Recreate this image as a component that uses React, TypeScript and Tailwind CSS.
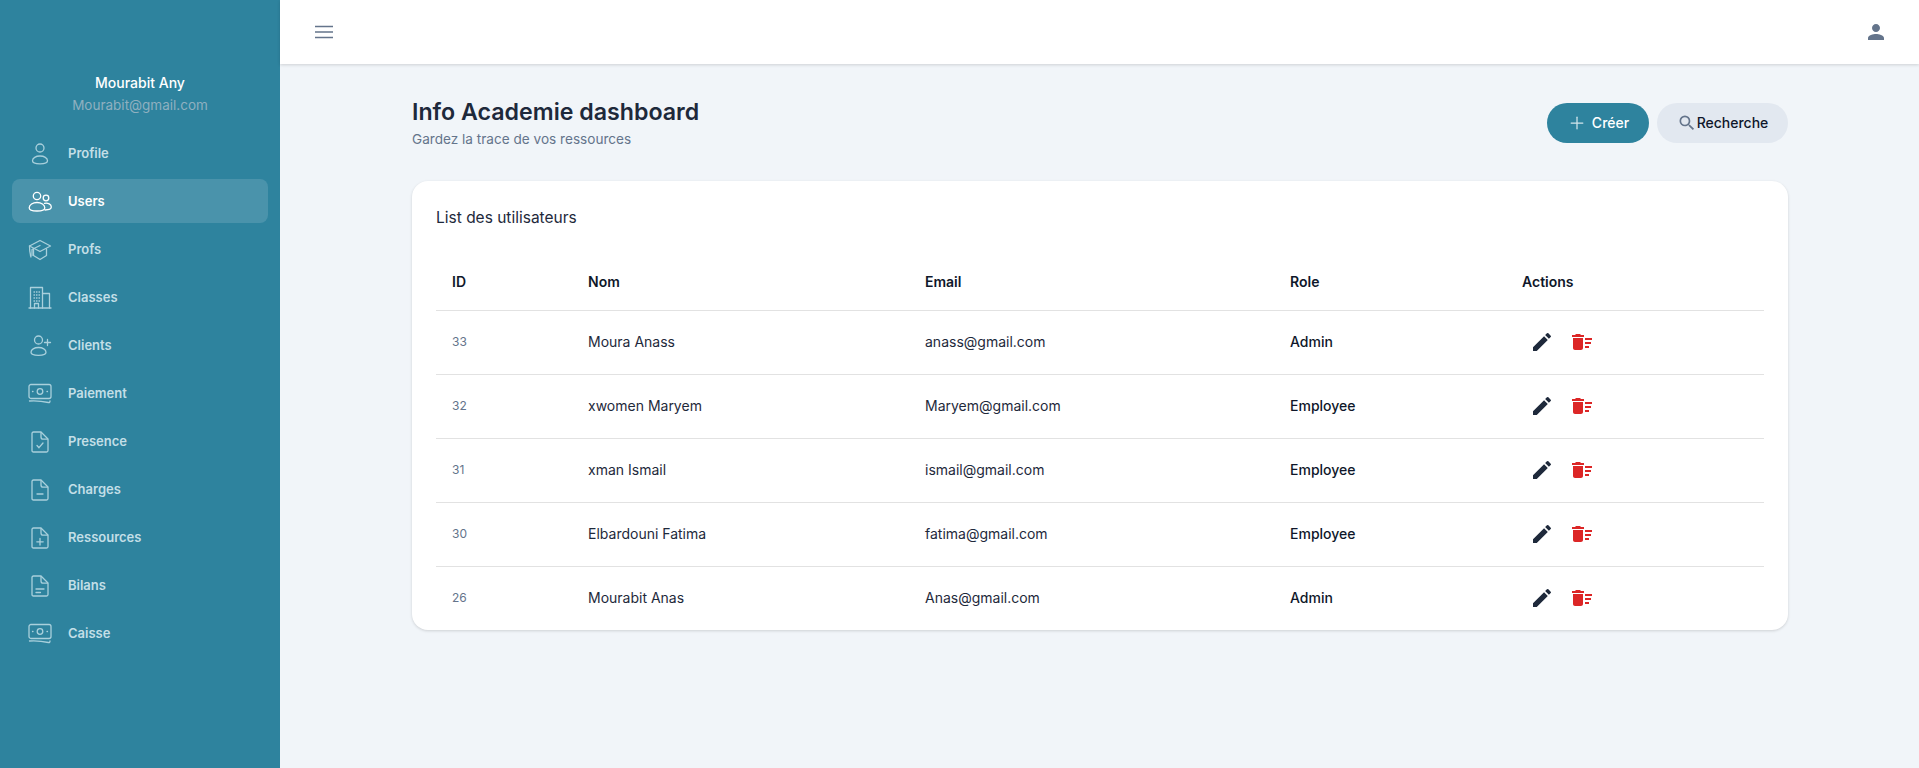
import { Plus } from "lucide-react"
import { MdDeleteSweep, MdEdit, MdOutlineSearch, MdPerson } from "react-icons/md"
import type { ReactNode } from "react"

const Icon = ({ children }: { children: ReactNode }) => (
  <svg viewBox="0 0 24 24" fill="none" stroke="currentColor" strokeWidth={1.3} strokeLinecap="round" strokeLinejoin="round" className="w-6 h-6 shrink-0">
    {children}
  </svg>
)

const PersonIcon = () => (
  <Icon>
    <circle cx="12" cy="6" r="4" />
    <path d="M12 14c-4.200 0-7.500 2-7.500 4.700 0 2.200 3.300 3.100 7.500 3.100s7.500-.9 7.500-3.100C19.500 16 16.200 14 12 14z" />
  </Icon>
)

const UsersIcon = () => (
  <Icon>
    <circle cx="9" cy="6" r="3.700" />
    <circle cx="18" cy="8" r="2.800" />
    <path d="M9 12.500c-4.200 0-7.800 2.200-7.800 5.200 0 2.300 3.600 3.300 7.800 3.300s7.800-1 7.800-3.300c0-3-3.600-5.200-7.800-5.200z" />
    <path d="M16.500 13.300c3.500-.6 6.800.8 6.800 3.800 0 2-2.500 2.900-6.300 2.900" />
  </Icon>
)

const CapIcon = () => (
  <Icon>
    <path d="M12 2.500 1.500 8 12 13.500 22.500 8z" />
    <path d="M5.500 11v6.500L12 21.500l6.500-4V11" />
    <path d="M1.500 8c0 4 .5 8 1.500 11" />
    <path d="M12 7.500 4 11.500v6" />
  </Icon>
)

const BuildingIcon = () => (
  <Icon>
    <path d="M1 22h22" />
    <path d="M2.500 22V1.500h12V22" />
    <path d="M14.500 7.500h7V22" />
    <path d="M6.500 22v-4.500h4V22" />
    <path d="M6 6h.5M8.500 6H9M11 6h.5M6 9h.5M8.500 9H9M11 9h.5M6 12h.5M8.500 12H9M11 12h.5M6 15h.5M8.500 15H9M11 15h.5" />
  </Icon>
)

const UserPlusIcon = () => (
  <Icon>
    <circle cx="10.500" cy="6" r="4" />
    <path d="M10.500 13.500c-4.200 0-7.500 2-7.500 4.700 0 2.200 3.300 3.100 7.500 3.100s7.500-.9 7.500-3.100c0-2.700-3.300-4.700-7.500-4.700z" />
    <path d="M19.500 5.500v6M16.500 8.500h6" />
  </Icon>
)

const MoneyIcon = () => (
  <Icon>
    <rect x="1" y="2.500" width="22" height="14" rx="2" />
    <circle cx="12" cy="9.500" r="2.800" />
    <path d="M4.500 9.500h.5M19 9.500h.5" />
    <path d="M1.500 19c7-.5 13 .2 19 1.500 1 .2 1.500-.5 1.500-1.500" />
  </Icon>
)

const Doc = ({ children }: { children?: ReactNode }) => (
  <Icon>
    <path d="M4 3.500c0-1 .5-1.500 1.500-1.500H13l7 7v11.500c0 1-.5 1.500-1.500 1.500h-13C4.500 22 4 21.500 4 20.500z" />
    <path d="M13 2.500V7c0 1.500.7 2.200 2.200 2.200h4.300" />
    {children}
  </Icon>
)

const navItems = [
  { label: "Profile", icon: <PersonIcon /> },
  { label: "Users", icon: <UsersIcon />, active: true },
  { label: "Profs", icon: <CapIcon /> },
  { label: "Classes", icon: <BuildingIcon /> },
  { label: "Clients", icon: <UserPlusIcon /> },
  { label: "Paiement", icon: <MoneyIcon /> },
  { label: "Presence", icon: <Doc><path d="m9 15.500 2 2.200 4-4.700" /></Doc> },
  { label: "Charges", icon: <Doc><path d="M9 16h6" /></Doc> },
  { label: "Ressources", icon: <Doc><path d="M12 12.500v6.500M8.800 15.800h6.400" /></Doc> },
  { label: "Bilans", icon: <Doc><path d="M8 15h8M8 18.500h4.500" /></Doc> },
  { label: "Caisse", icon: <MoneyIcon /> },
]

const users = [
  { id: 33, name: "Moura Anass", email: "anass@gmail.com", role: "Admin" },
  { id: 32, name: "xwomen Maryem", email: "Maryem@gmail.com", role: "Employee" },
  { id: 31, name: "xman Ismail", email: "ismail@gmail.com", role: "Employee" },
  { id: 30, name: "Elbardouni Fatima", email: "fatima@gmail.com", role: "Employee" },
  { id: 26, name: "Mourabit Anas", email: "Anas@gmail.com", role: "Admin" },
]

export default function App() {
  return (
    <div className="flex h-[768px] overflow-hidden bg-[#f1f5f9] font-['Inter',sans-serif]">
      <aside className="w-[280px] shrink-0 bg-[#2e839e] px-3">
        <div className="h-[131px] pt-[72px] text-center">
          <p className="text-sm font-medium leading-[22px] text-white">Mourabit Any</p>
          <p className="text-[13.5px] leading-[22px] text-[#8fb0c0]">Mourabit@gmail.com</p>
        </div>
        <nav className="flex flex-col gap-1">
          {navItems.map((item) => (
            <a
              key={item.label}
              href="#"
              className={`flex h-11 items-center gap-4 rounded-lg px-4 pt-[2px] text-[13px] font-semibold ${
                item.active ? "bg-[#4a93ab] text-white" : "text-[#c3dfe7]"
              }`}
            >
              <span className={item.active ? "text-white" : "text-[#a9d0dc]"}>{item.icon}</span>
              {item.label}
            </a>
          ))}
        </nav>
      </aside>

      <div className="flex min-w-0 flex-1 flex-col">
        <header className="flex h-16 shrink-0 items-center justify-between bg-white pl-8 pr-[31px] shadow-[0_1px_3px_rgba(0,0,0,0.15)]">
          <svg viewBox="0 0 24 24" fill="none" stroke="currentColor" strokeWidth={1.5} className="h-6 w-6 text-[#64748b]">
            <path d="M3 6.500h18M3 12h18M3 17.500h18" />
          </svg>
          <MdPerson className="h-6 w-6 text-[#64748b]" />
        </header>

        <main className="pl-[132px] pr-[131px] pt-[30px]">
          <div className="flex items-center justify-between">
            <div>
              <h1 className="text-[23.2px] font-semibold leading-9 text-[#1e293b]">Info Academie dashboard</h1>
              <p className="-mt-px text-[13.6px] leading-5 text-[#64748b]">Gardez la trace de vos ressources</p>
            </div>
            <div className="mt-[2px] flex gap-2">
              <button className="flex h-10 w-[102px] items-center justify-center gap-[5px] rounded-full bg-[#2e839e] text-sm font-medium text-white">
                <Plus className="h-5 w-5 text-[#d3e6ec]" strokeWidth={1.5} />
                Créer
              </button>
              <button className="flex h-10 w-[131px] items-center justify-center rounded-full bg-[#e2e8f0] text-sm font-medium text-[#0f172a]">
                <MdOutlineSearch className="h-5 w-5 text-[#64748b]" />
                Recherche
              </button>
            </div>
          </div>

          <section className="mt-[32px] rounded-2xl bg-white px-6 shadow-[0_1px_3px_rgba(0,0,0,0.15)]">
            <h2 className="pt-[25px] text-[15.5px] font-normal leading-6 text-[#1e293b]">List des utilisateurs</h2>
            <table className="mt-[16px] w-full table-fixed text-left text-sm">
              <thead>
                <tr className="h-[64px] text-[#0f172a]">
                  <th className="w-[136px] px-4 pt-[8px] font-semibold">ID</th>
                  <th className="w-[337px] px-4 pt-[8px] font-semibold">Nom</th>
                  <th className="w-[365px] px-4 pt-[8px] font-semibold">Email</th>
                  <th className="w-[232px] px-4 pt-[8px] font-semibold">Role</th>
                  <th className="px-4 pt-[8px] font-semibold">Actions</th>
                </tr>
              </thead>
              <tbody>
                {users.map((user) => (
                  <tr key={user.id} className="h-16 border-t border-[#e2e2e2]">
                    <td className="px-4 text-xs text-[#64748b]">{user.id}</td>
                    <td className="px-4 text-[#1e293b]">{user.name}</td>
                    <td className="px-4 text-[#1e293b]">{user.email}</td>
                    <td className="px-4 font-medium text-[#0f172a]">{user.role}</td>
                    <td className="px-4">
                      <div className="flex items-center gap-4 pl-2">
                        <MdEdit className="h-6 w-6 text-[#1e293b]" />
                        <MdDeleteSweep className="h-6 w-6 text-[#dc2626]" />
                      </div>
                    </td>
                  </tr>
                ))}
              </tbody>
            </table>
          </section>
        </main>
      </div>
    </div>
  )
}
